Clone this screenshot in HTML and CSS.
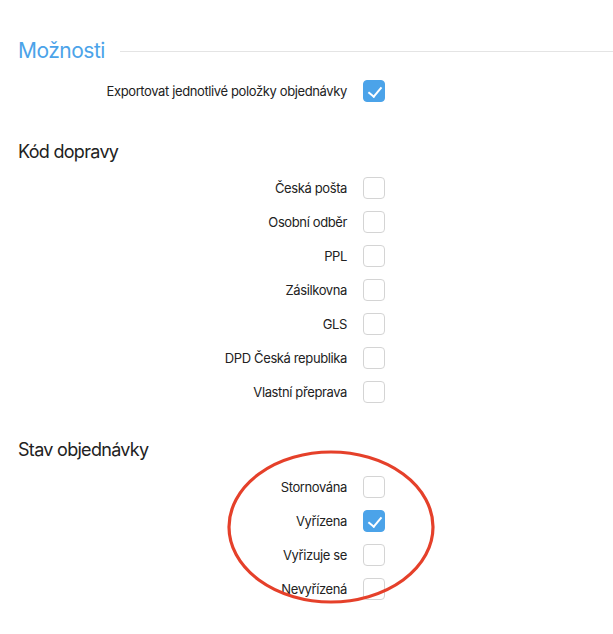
FILE: index.html
```html
<!DOCTYPE html>
<html lang="cs">
<head>
  <meta charset="UTF-8" />
  <title>Možnosti exportu</title>
  <link rel="stylesheet" href="styles.css">
</head>
<body>
  <main class="page">
    <h2 class="legend">Možnosti</h2>

    <div class="options options-first">
      <label class="row">
        <span class="label">Exportovat jednotlivé položky objednávky</span>
        <span class="check checked"></span>
      </label>
    </div>

    <h3 class="group-title">Kód dopravy</h3>
    <div class="options">
      <label class="row"><span class="label">Česká pošta</span><span class="check"></span></label>
      <label class="row"><span class="label">Osobní odběr</span><span class="check"></span></label>
      <label class="row"><span class="label">PPL</span><span class="check"></span></label>
      <label class="row"><span class="label">Zásilkovna</span><span class="check"></span></label>
      <label class="row"><span class="label">GLS</span><span class="check"></span></label>
      <label class="row"><span class="label">DPD Česká republika</span><span class="check"></span></label>
      <label class="row"><span class="label">Vlastní přeprava</span><span class="check"></span></label>
    </div>

    <h3 class="group-title group-title-last">Stav objednávky</h3>
    <div class="options options-last">
      <label class="row"><span class="label">Stornována</span><span class="check"></span></label>
      <label class="row"><span class="label">Vyřízena</span><span class="check checked"></span></label>
      <label class="row"><span class="label">Vyřizuje se</span><span class="check"></span></label>
      <label class="row"><span class="label">Nevyřízená</span><span class="check"></span></label>
    </div>

    <!-- zakroužkováno -->
    <svg class="mark" width="210" height="156" viewBox="0 0 210 156">
      <ellipse cx="105" cy="78" rx="102" ry="75" fill="none" stroke="#e5402a" stroke-width="3.2" />
    </svg>
  </main>
</body>
</html>
```

FILE: styles.css
```css
* {
  box-sizing: border-box;
  margin: 0;
  padding: 0;
}

body {
  font-family: 'Inter', 'Noto Sans', sans-serif;
  background: #fff;
  color: #222;
}

.page {
  position: relative;
  padding: 37px 0 40px 18px;
}

.legend {
  display: flex;
  align-items: center;
  font-size: 21px;
  line-height: 28px;
  font-weight: 400;
  color: #4ba3e9;
  letter-spacing: -0.5px;
}

.legend::after {
  content: '';
  flex: 1;
  height: 1px;
  margin-left: 15px;
  background: #e4e4e4;
}

.options {
  margin-top: 7px;
}

.options-first {
  margin-top: 9px;
}

.options-last {
  margin-top: 8px;
}

.group-title {
  margin-top: 32px;
  font-size: 18px;
  line-height: 24px;
  font-weight: 400;
  color: #222;
  letter-spacing: -0.7px;
}

.group-title-last {
  margin-top: 29px;
}

.row {
  display: grid;
  grid-template-columns: 329px 22px;
  column-gap: 16px;
  align-items: center;
  height: 34px;
  font-size: 13px;
  letter-spacing: -0.38px;
}

.label {
  text-align: right;
}

.check {
  position: relative;
  width: 22px;
  height: 22px;
  border: 1px solid #d4d4d4;
  border-radius: 4px;
  background: #fff;
}

.check.checked {
  background: #4ba3e9;
  border-color: #4ba3e9;
}

.check.checked::after {
  content: '';
  position: absolute;
  left: 7px;
  top: 3px;
  width: 6px;
  height: 11px;
  border: solid #fff;
  border-width: 0 2px 2px 0;
  transform: rotate(40deg);
}

.mark {
  position: absolute;
  left: 226px;
  top: 449px;
}
```
